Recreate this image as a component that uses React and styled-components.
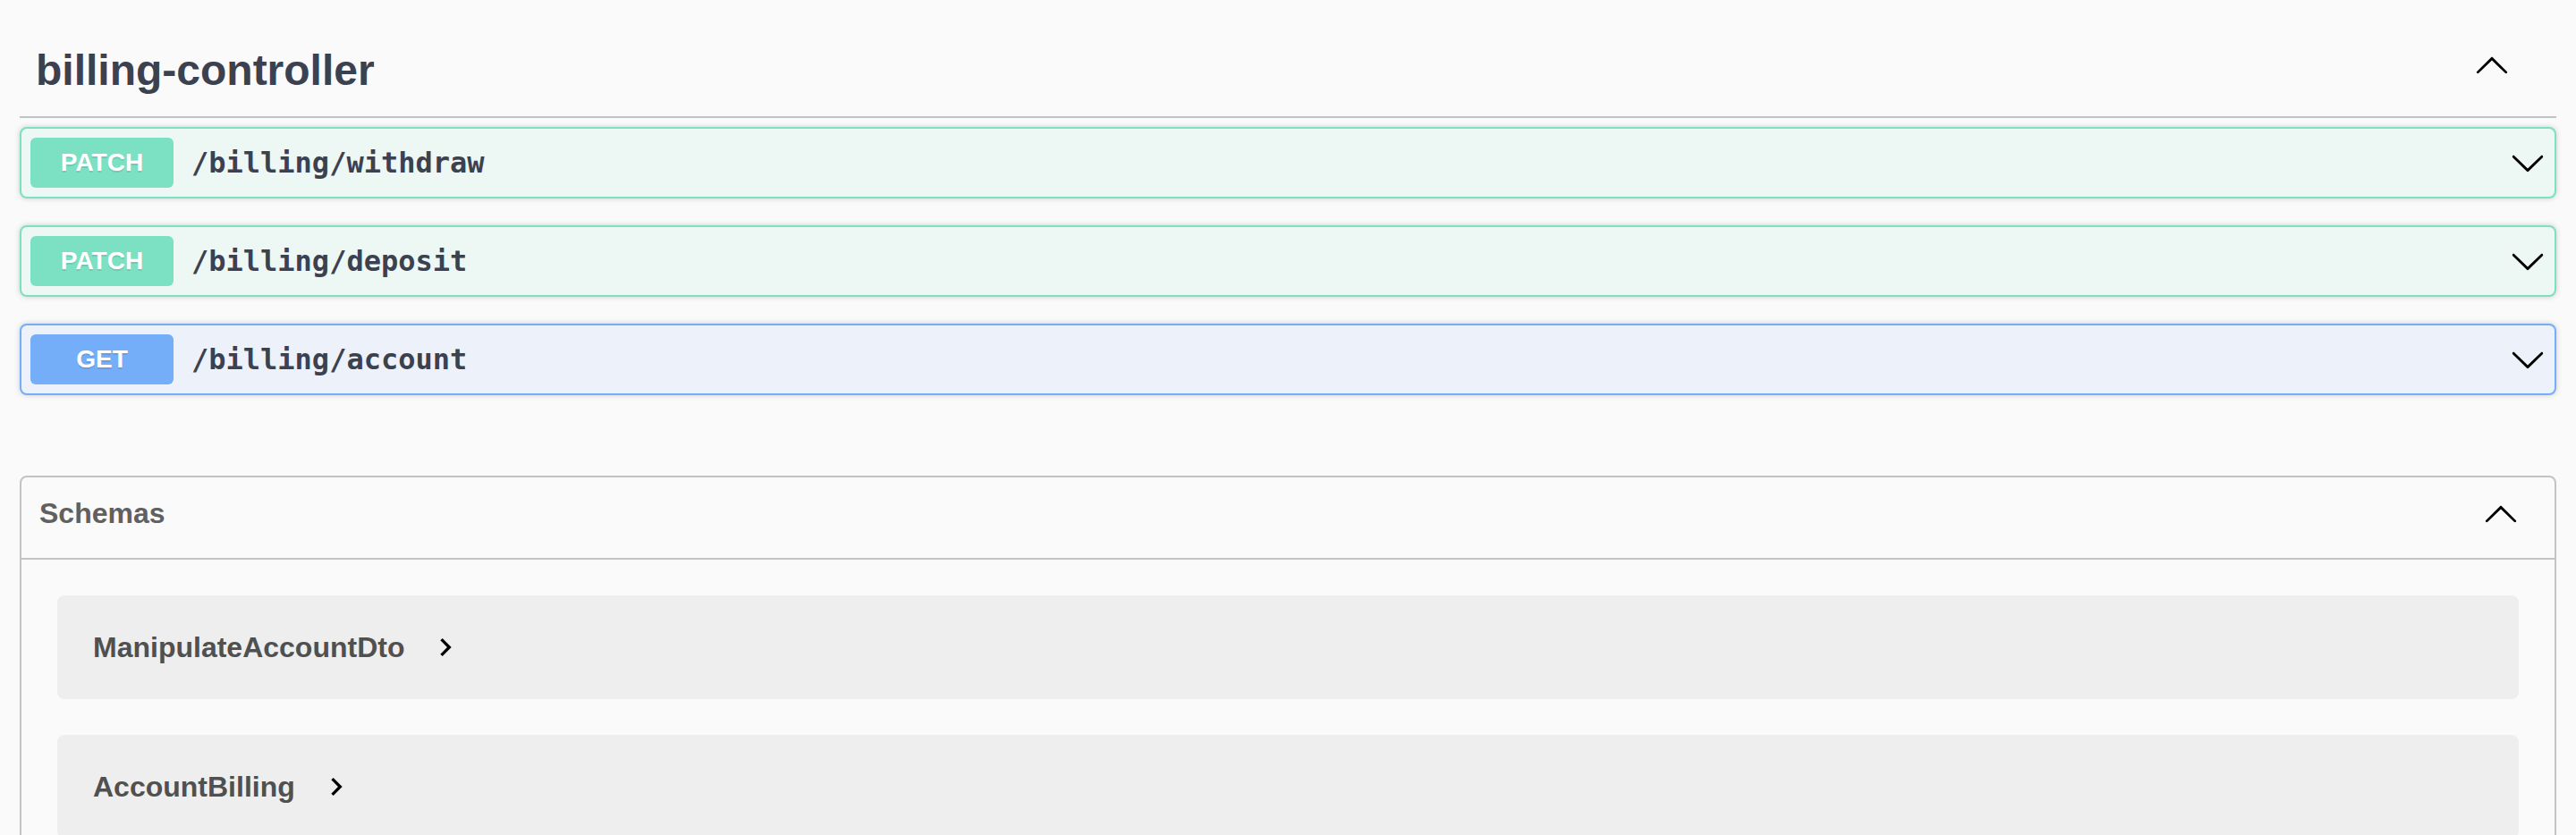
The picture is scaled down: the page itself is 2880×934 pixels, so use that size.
import React from "react";
import styled, { createGlobalStyle } from "styled-components";

const GlobalStyle = createGlobalStyle`
  html, body {
    margin: 0;
    padding: 0;
    background: #fafafa;
  }
  body {
    font-family: "Liberation Sans", Arial, sans-serif;
  }
`;

const SANS = `"Liberation Sans", Arial, Helvetica, sans-serif`;
const MONO = `"DejaVu Sans Mono", "Liberation Mono", monospace`;

const variants = {
  patch: { border: "#7ce0c3", bg: "#edf7f4", badge: "#7ce0c3" },
  get: { border: "#74adf8", bg: "#edf2fa", badge: "#74adf8" },
};

const Page = styled.div`
  padding: 32px 22px 0;
`;

const TagSection = styled.section`
  display: flex;
  flex-direction: column;
  margin-bottom: 90px;
`;

const TagHeading = styled.h3`
  display: flex;
  align-items: center;
  margin: 0 0 10px;
  padding: 20px 52px 24px 18px;
  border-bottom: 2px solid #c1c3c7;
  font-family: ${SANS};
  font-weight: 700;
  font-size: 48px;
  line-height: 54px;
  color: #3c4150;
`;

const TagTitle = styled.span`
  flex: 1;
`;

const HeadingArrow = styled.svg`
  width: 40px;
  height: 40px;
  margin-bottom: 14px;
  flex: none;
`;

const OpList = styled.div`
  display: flex;
  flex-direction: column;
  gap: 30px;
`;

const OpBlock = styled.div`
  border: 2px solid ${(p) => variants[p.$method].border};
  background: ${(p) => variants[p.$method].bg};
  border-radius: 8px;
  box-shadow: 0 0 6px rgba(0, 0, 0, 0.19);
`;

const OpSummary = styled.div`
  display: flex;
  align-items: center;
  padding: 10px;
`;

const MethodBadge = styled.span`
  flex: none;
  min-width: 160px;
  padding: 12px 0;
  border-radius: 6px;
  background: ${(p) => variants[p.$method].badge};
  color: #fff;
  font-family: ${SANS};
  font-weight: 700;
  font-size: 28px;
  line-height: 32px;
  text-align: center;
  text-shadow: 0 2px 0 rgba(0, 0, 0, 0.1);
`;

const OpPath = styled.span`
  flex: 1;
  padding: 0 20px;
  font-family: ${MONO};
  font-weight: 700;
  font-size: 32px;
  color: #3c4150;
`;

const RowArrow = styled.svg`
  width: 40px;
  height: 40px;
  flex: none;
`;

const Models = styled.section`
  border: 2px solid #c1c3c7;
  border-radius: 8px;
  padding-bottom: 40px;
`;

const ModelsHeader = styled.h4`
  display: flex;
  align-items: center;
  margin: 0;
  padding: 20px 40px 30px 20px;
  border-bottom: 2px solid #c1c3c7;
  font-family: ${SANS};
  font-weight: 700;
  font-size: 32px;
  color: #606060;
`;

const ModelsTitle = styled.span`
  flex: 1;
`;

const ModelList = styled.div`
  display: flex;
  flex-direction: column;
  gap: 40px;
  padding: 40px 40px 0;
`;

const ModelContainer = styled.div`
  display: flex;
  align-items: center;
  height: 116px;
  padding: 0 40px;
  background: #eeeeee;
  border-radius: 8px;
`;

const ModelTitle = styled.span`
  font-family: ${SANS};
  font-weight: 700;
  font-size: 32px;
  color: #505050;
`;

const Toggle = styled.svg`
  width: 40px;
  height: 40px;
  margin-left: 26px;
  flex: none;
`;

const ArrowUp = (props) => (
  <svg viewBox="0 0 20 20" {...props}>
    <path d="M17.418 14.908c.272.268.709.268.979 0s.279-.701 0-.969l-7.908-7.83c-.27-.268-.707-.268-.979 0l-7.908 7.83c-.27.268-.27.701 0 .969.271.268.709.268.979 0L10 7.767l7.418 7.141z" />
  </svg>
);

const upPath =
  "M17.418 14.908c.272.268.709.268.979 0s.279-.701 0-.969l-7.908-7.83c-.27-.268-.707-.268-.979 0l-7.908 7.83c-.27.268-.27.701 0 .969.271.268.709.268.979 0L10 7.767l7.418 7.141z";
const downPath =
  "M17.418 6.109c.272-.268.709-.268.979 0s.279.701 0 .969l-7.908 7.83c-.27.268-.707.268-.979 0l-7.908-7.83c-.27-.268-.27-.701 0-.969.271-.268.709-.268.979 0L10 13.25l7.418-7.141z";
const rightPath = "M10 6 8.59 7.41 13.17 12l-4.58 4.59L10 18l6-6z";

const ops = [
  { method: "patch", label: "PATCH", path: "/billing/withdraw" },
  { method: "patch", label: "PATCH", path: "/billing/deposit" },
  { method: "get", label: "GET", path: "/billing/account" },
];

const models = ["ManipulateAccountDto", "AccountBilling"];

export default function App() {
  return (
    <>
      <GlobalStyle />
      <Page>
        <TagSection>
          <TagHeading>
            <TagTitle>billing-controller</TagTitle>
            <HeadingArrow viewBox="0 0 20 20">
              <path d={upPath} fill="#000" />
            </HeadingArrow>
          </TagHeading>
          <OpList>
            {ops.map((op) => (
              <OpBlock key={op.path} $method={op.method}>
                <OpSummary>
                  <MethodBadge $method={op.method}>{op.label}</MethodBadge>
                  <OpPath>{op.path}</OpPath>
                  <RowArrow viewBox="0 0 20 20">
                    <path d={downPath} fill="#000" />
                  </RowArrow>
                </OpSummary>
              </OpBlock>
            ))}
          </OpList>
        </TagSection>
        <Models>
          <ModelsHeader>
            <ModelsTitle>Schemas</ModelsTitle>
            <RowArrow viewBox="0 0 20 20">
              <path d={upPath} fill="#000" />
            </RowArrow>
          </ModelsHeader>
          <ModelList>
            {models.map((m) => (
              <ModelContainer key={m}>
                <ModelTitle>{m}</ModelTitle>
                <Toggle viewBox="0 0 24 24">
                  <path d={rightPath} fill="#000" />
                </Toggle>
              </ModelContainer>
            ))}
          </ModelList>
        </Models>
      </Page>
    </>
  );
}
